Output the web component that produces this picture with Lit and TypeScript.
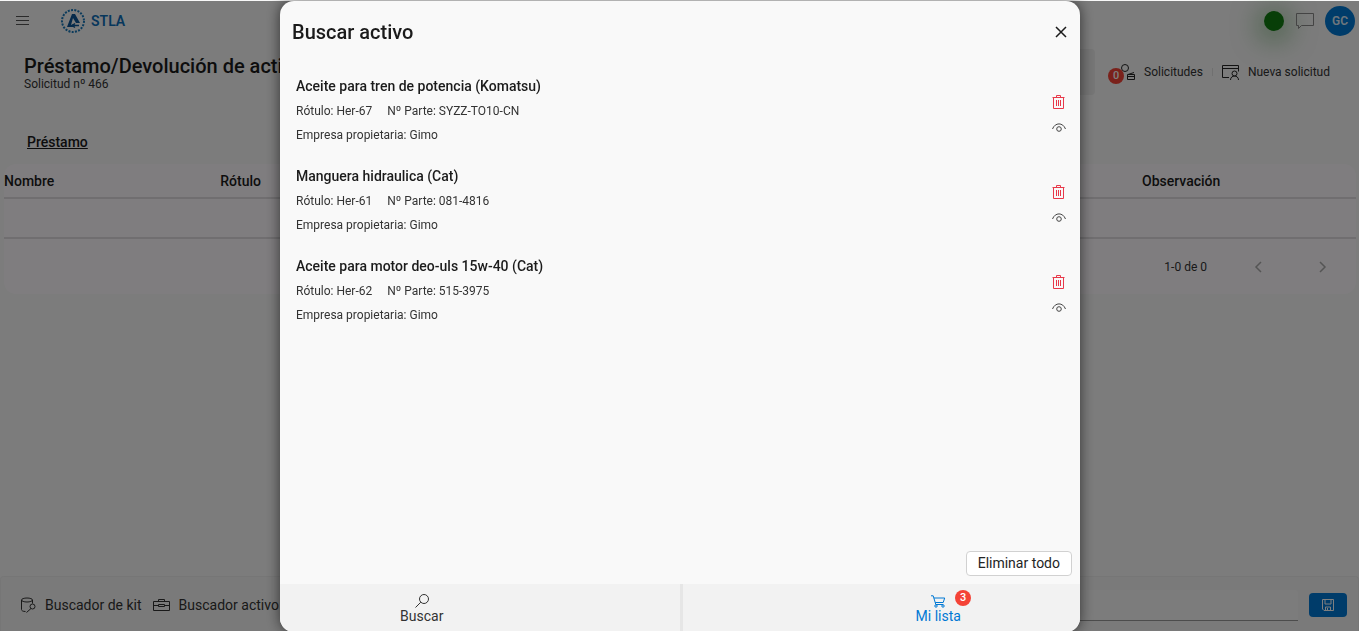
import { LitElement, html, css, svg } from "lit";
import { customElement, property } from "lit/decorators.js";

interface Asset {
  name: string;
  label: string;
  part: string;
  owner: string;
}

const assets: Asset[] = [
  { name: "Aceite para tren de potencia (Komatsu)", label: "Her-67", part: "SYZZ-TO10-CN", owner: "Gimo" },
  { name: "Manguera hidraulica (Cat)", label: "Her-61", part: "081-4816", owner: "Gimo" },
  { name: "Aceite para motor deo-uls 15w-40 (Cat)", label: "Her-62", part: "515-3975", owner: "Gimo" },
];

const icons: Record<string, unknown> = {
  menu: svg`<path d="M1 3.500h13M1 7.500h13M1 11.500h13"/>`,
  chat: svg`<path d="M.5.5h17v12h-12L2.500 15.500v-3h-2z"/>`,
  people: svg`<circle cx="8" cy="4" r="3.500"/><path d="M10.500 10.500h7v5h-7zM10.500 12.500h7M11 10.500L17 8.500"/>`,
  request: svg`<path d="M7 13.500H.5V1.500h16v6M.5 4.500h16"/><circle cx="12.500" cy="9.500" r="2.500"/><path d="M8.500 16c0-5.300 8-5.300 8 0"/>`,
  kit: svg`<ellipse cx="6" cy="3" rx="5.500" ry="2"/><path d="M.5 3v9.500c0 1.200 1.500 2 4 2M11.500 3v3.500"/><circle cx="11.500" cy="9.500" r="2.500"/><path d="M10 11.500L5.500 15.500"/>`,
  toolbox: svg`<path d="M.5 3.500h16v9H.5zM5.500 3.500v-2h6v2M.5 7.500h5m6 0h5M5.500 6.500h6v2h-6z"/>`,
  save: svg`<path d="M.5.5h11v11H2L.5 10zM3 .5v4.500h6V.5M3.500 11.500V8h5v3.500M5.500 9v2"/>`,
  close: svg`<path d="M1 1l10 10M11 1L1 11"/>`,
  trash: svg`<path d="M.5 2.500h12M4.500 2.500v-2h4v2M1.500 2.500v11h10v-11M4.500 5v6M6.500 5v6M8.500 5v6"/>`,
  eye: svg`<path d="M.5 6C3-.8 11-.8 13.500 6"/><circle cx="7" cy="6" r="2.300"/>`,
  search: svg`<circle cx="9" cy="5" r="4.500"/><path d="M5.800 8.200L.5 13.500"/>`,
  cart: svg`<path d="M0 .8h2.200l2.600 8.700h7.400M2.900 3h10.800L12.200 7.500H4.200"/><circle cx="5" cy="11" r="1.200"/><circle cx="12" cy="11" r="1.200"/>`,
  prev: svg`<path d="M6 1L1 6l5 5"/>`,
  next: svg`<path d="M1 1l5 5-5 5"/>`,
};

const icon = (name: string, w: number, h: number) =>
  html`<svg class="icon icon-${name}" width=${w} height=${h} viewBox="0 0 ${w} ${h}" aria-hidden="true">${icons[name]}</svg>`;

const shared = css`
  * { box-sizing: border-box; }
  h1, h2, h3, p, ul { margin: 0; padding: 0; font-weight: 400; }
  button { font: inherit; color: inherit; background: none; border: 0; padding: 0; cursor: pointer; }
  .icon { display: block; flex: none; fill: none; stroke: currentColor; stroke-width: 1; overflow: visible; }
  .badge {
    display: grid; place-items: center; width: 16px; height: 16px; border-radius: 50%;
    background: #f44336; color: #fff; font-size: 11px; line-height: 16px; font-weight: 500;
  }
`;

@customElement("asset-row")
class AssetRow extends LitElement {
  @property({ attribute: false }) asset!: Asset;

  static styles = [shared, css`
    :host { display: flex; justify-content: space-between; padding: 0 14px 0 16px; height: 90px; }
    .name { font-size: 14px; line-height: 24px; font-weight: 500; color: #1b1b1b; margin-bottom: 1px; }
    .line { display: flex; gap: 15px; font-size: 12px; line-height: 24px; color: #333; }
    .actions { display: flex; flex-direction: column; align-items: flex-start; gap: 14px; padding-top: 21px; }
    .icon-trash { color: #e8384a; }
    .icon-eye { color: #444; }
  `];

  render() {
    const a = this.asset;
    return html`
      <div>
        <h3 class="name">${a.name}</h3>
        <p class="line"><span>Rótulo: ${a.label}</span><span>Nº Parte: ${a.part}</span></p>
        <p class="line">Empresa propietaria: ${a.owner}</p>
      </div>
      <div class="actions">
        <button aria-label="Eliminar">${icon("trash", 13, 14)}</button>
        <button aria-label="Ver">${icon("eye", 14, 9)}</button>
      </div>`;
  }
}

@customElement("asset-dialog")
class AssetDialog extends LitElement {
  static styles = [shared, css`
    :host {
      display: flex; flex-direction: column; width: min(800px, 100%); height: 100%;
      border-radius: 14px; overflow: hidden; background: #f9f9f9; color: #1b1b1b;
      box-shadow: 0 0 14px rgba(0, 0, 0, .6);
    }
    header { display: flex; justify-content: space-between; align-items: center; padding: 19px 13px 18px 12px; }
    .title { font-size: 20px; line-height: 24px; font-weight: 500; }
    .close .icon { stroke-width: 1.500; }
    .list { flex: 1; list-style: none; padding-top: 12px; overflow: hidden; }
    .foot { display: flex; justify-content: flex-end; padding: 8px; }
    .clear { padding: 0 11px; line-height: 23px; font-size: 14px; border: 1px solid #d1d1d1; border-radius: 4px; background: #fff; color: #242424; }
    .tabs { display: flex; background: #f2f2f2; height: 48px; }
    .tab { flex: 1; display: flex; flex-direction: column; align-items: center; padding-top: 10px; font-size: 14px; line-height: 16px; color: #333; }
    .first { padding-right: 116px; border-right: 3px solid #e6e6e6; }
    .second { padding-left: 114px; color: #0078d4; }
    .mark { position: relative; }
    .mark .icon { margin: 1px 0; }
    .mark .badge { position: absolute; left: 24px; top: -4px; }
  `];

  render() {
    return html`
      <header>
        <h2 class="title">Buscar activo</h2>
        <button class="close" aria-label="Cerrar">${icon("close", 12, 12)}</button>
      </header>
      <ul class="list">${assets.map((a) => html`<li><asset-row .asset=${a}></asset-row></li>`)}</ul>
      <div class="foot"><button class="clear">Eliminar todo</button></div>
      <nav class="tabs">
        <button class="tab first">${icon("search", 14, 14)}Buscar</button>
        <button class="tab second"><span class="mark">${icon("cart", 14, 12)}<span class="badge">3</span></span>Mi lista</button>
      </nav>`;
  }
}

@customElement("app-root")
class AppRoot extends LitElement {
  static styles = [shared, css`
    :host { display: block; height: 100vh; overflow: hidden; font-family: Roboto, "Liberation Sans", sans-serif; font-size: 14px; color: #333; background: #f8f8f8; }
    .page { display: flex; flex-direction: column; height: 100%; padding-top: 1px; }
    .top { display: flex; align-items: center; justify-content: space-between; height: 40px; padding: 0 4px 0 15px; }
    .brand, .status, .tools, .pair { display: flex; align-items: center; }
    .menu { color: #555; margin-top: -2px; }
    .brand .logo { margin-left: 30px; }
    .brand strong { margin-left: 5px; font-size: 14px; font-weight: 600; color: #0e6fb8; }
    .dot { width: 20px; height: 20px; border-radius: 50%; background: #107c10; box-shadow: 0 4px 28px 4px rgba(16, 124, 16, .55); }
    .chat { color: #888; margin: 0 11px 0 12px; }
    .avatar { display: grid; place-items: center; width: 30px; height: 30px; border-radius: 50%; background: #0078d4; color: #deecf9; font-size: 12px; font-weight: 600; }
    .head { display: flex; justify-content: space-between; padding: 8px 29px 0 24px; height: 85px; }
    .head h1 { font-size: 20px; line-height: 24px; font-weight: 500; margin-top: 5px; color: #1b1b1b; }
    .head p { font-size: 12px; line-height: 12px; }
    .panel { width: 220px; height: 46px; border-radius: 4px; background: #ececec; margin-right: 22px; }
    .tools { height: 46px; align-items: flex-start; font-size: 12px; line-height: 46px; }
    .tools button { display: flex; align-items: center; gap: 9px; }
    .tools .icon { color: #242424; }
    .mark { position: relative; }
    .mark .badge { position: absolute; left: -9px; top: 4px; }
    .sep { width: 1px; height: 8px; margin: 19px 9px; background: #e0e0e0; }
    .tab { padding: 8px 27px; height: 38px; line-height: 16px; font-weight: 500; }
    .tab a { color: #1b1b1b; text-decoration: underline; }
    .card { margin: 0 3px 0 4px; border-radius: 12px; background: #fffbff; overflow: hidden; }
    table { width: 100%; border-collapse: collapse; table-layout: fixed; }
    th { padding: 0; height: 34px; text-align: left; font-size: 14px; font-weight: 500; color: #1b1b1b; border-bottom: 2px solid #e0dde1; }
    td { padding: 0; height: 40px; border-bottom: 2px solid #e0dde1; }
    .narrow { width: 16%; }
    .last { width: 214px; }
    .pager { display: flex; align-items: center; justify-content: flex-end; height: 55px; padding: 0 30px 0 0; font-size: 12px; }
    .pager .icon { stroke-width: 1.500; color: #aaa; }
    .pager button { margin-left: 48px; padding: 4px 0; }
    .pager button + button { margin-left: 57px; }
    .bottom { display: flex; align-items: center; height: 55px; margin-top: auto; padding: 2px 11px 0 20px; border: 1px solid #ededed; border-bottom: 0; border-radius: 4px 4px 0 0; background: #f5f5f5; }
    .pair { gap: 9px; margin-right: 11px; white-space: nowrap; }
    .note { flex: 1; min-width: 0; height: 31px; border: 0; border-bottom: 1px solid #999; border-radius: 4px 4px 0 0; background: #f9f9f9; }
    .save { display: grid; place-items: center; width: 38px; height: 24px; margin-left: 11px; border-radius: 4px; background: #0078d4; color: #fff; }
    .overlay { position: fixed; inset: 1px 0 -1px; display: flex; justify-content: center; padding-left: 1px; background: rgba(0, 0, 0, .5); }
  `];

  render() {
    return html`
      <div class="page">
        <header class="top">
          <div class="brand">
            <button class="menu" aria-label="Menú">${icon("menu", 15, 15)}</button>
            <svg class="logo" width="26" height="26" viewBox="0 0 26 26" aria-hidden="true">
              <circle cx="13" cy="13" r="11" fill="none" stroke="#1877b8" stroke-width="2" stroke-dasharray="2 1.300"/>
              <path d="M7 19L12 6h3l5 9h-4l-3-5-2 7 3-1v3z" fill="#0c5596"/>
              <path d="M13 17.500h6M15 15.500l-3 2 3 2" fill="none" stroke="#0c5596" stroke-width="1.500"/>
            </svg>
            <strong>STLA</strong>
          </div>
          <div class="status">
            <span class="dot"></span>
            <button class="chat" aria-label="Mensajes">${icon("chat", 18, 16)}</button>
            <span class="avatar">GC</span>
          </div>
        </header>
        <section class="head">
          <div>
            <h1>Préstamo/Devolución de activos</h1>
            <p>Solicitud nº 466</p>
          </div>
          <div class="tools">
            <div class="panel"></div>
            <button><span class="mark">${icon("people", 18, 17)}<span class="badge">0</span></span>Solicitudes</button>
            <span class="sep"></span>
            <button>${icon("request", 17, 17)}Nueva solicitud</button>
          </div>
        </section>
        <nav class="tab"><a href="#prestamo">Préstamo</a></nav>
        <section class="card">
          <table>
            <thead><tr><th class="narrow">Nombre</th><th class="narrow">Rótulo</th><th></th><th class="last">Observación</th></tr></thead>
            <tbody><tr><td colspan="4"></td></tr></tbody>
          </table>
          <div class="pager">
            <span>1-0 de 0</span>
            <button aria-label="Anterior">${icon("prev", 7, 12)}</button>
            <button aria-label="Siguiente">${icon("next", 7, 12)}</button>
          </div>
        </section>
        <footer class="bottom">
          <button class="pair">${icon("kit", 15, 16)}Buscador de kit</button>
          <button class="pair">${icon("toolbox", 17, 15)}Buscador activo</button>
          <input class="note" type="text" aria-label="Observación">
          <button class="save" aria-label="Guardar">${icon("save", 12, 12)}</button>
        </footer>
      </div>
      <div class="overlay"><asset-dialog role="dialog" aria-label="Buscar activo"></asset-dialog></div>`;
  }
}
